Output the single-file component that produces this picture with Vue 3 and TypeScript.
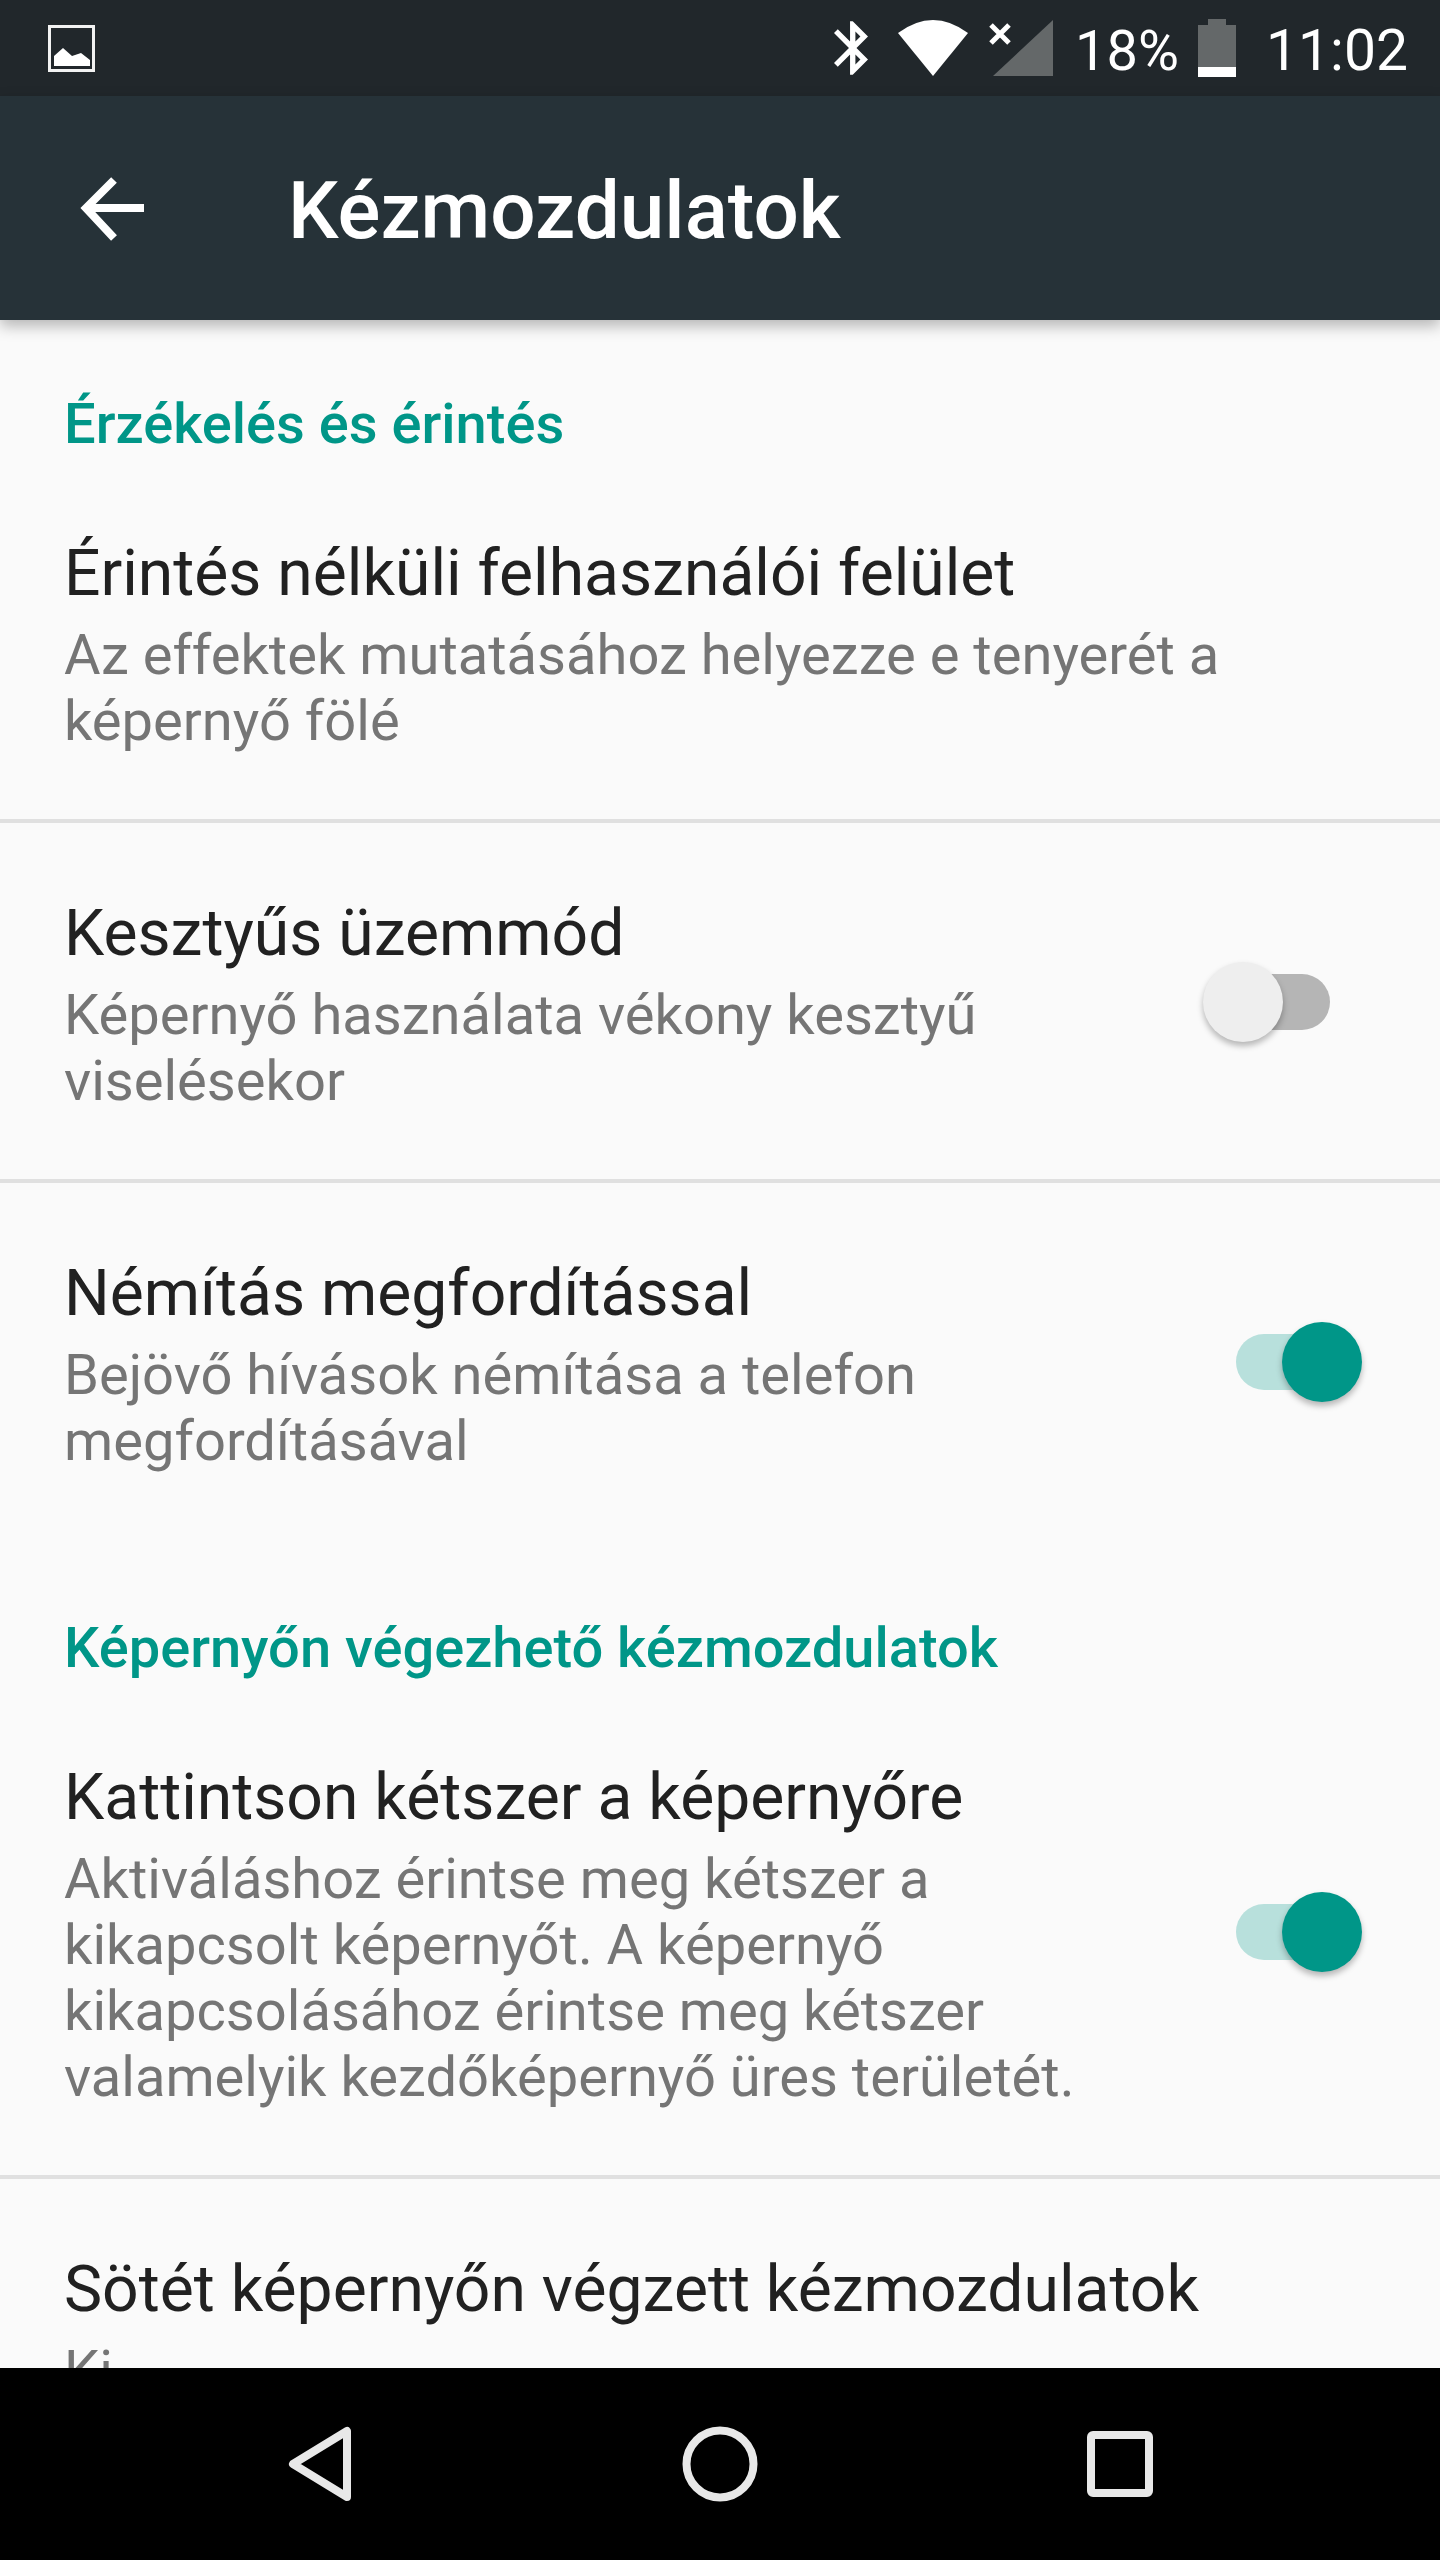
<script setup lang="ts">
interface Setting {
  title: string
  summary: string
  toggle?: boolean
  divider?: boolean
}

interface Section {
  heading: string
  items: Setting[]
}

const sections: Section[] = [
  {
    heading: 'Érzékelés és érintés',
    items: [
      {
        title: 'Érintés nélküli felhasználói felület',
        summary: 'Az effektek mutatásához helyezze e tenyerét a képernyő fölé',
        divider: true,
      },
      {
        title: 'Kesztyűs üzemmód',
        summary: 'Képernyő használata vékony kesztyű viselésekor',
        toggle: false,
        divider: true,
      },
      {
        title: 'Némítás megfordítással',
        summary: 'Bejövő hívások némítása a telefon megfordításával',
        toggle: true,
      },
    ],
  },
  {
    heading: 'Képernyőn végezhető kézmozdulatok',
    items: [
      {
        title: 'Kattintson kétszer a képernyőre',
        summary:
          'Aktiváláshoz érintse meg kétszer a kikapcsolt képernyőt. A képernyő kikapcsolásához érintse meg kétszer valamelyik kezdőképernyő üres területét.',
        toggle: true,
        divider: true,
      },
      {
        title: 'Sötét képernyőn végzett kézmozdulatok',
        summary: 'Ki',
      },
    ],
  },
]
</script>

<template>
  <div class="phone">
    <div class="status-bar">
      <svg class="pic-icon" width="47" height="47" viewBox="0 0 47 47">
        <rect x="1.5" y="1.5" width="44" height="44" fill="none" stroke="#f2f2f2" stroke-width="3" />
        <path d="M6 41V31l9-8 9 8 9-3 9 7v6z" fill="#fff" />
      </svg>
      <div class="status-right">
        <svg class="bt" width="34" height="56" viewBox="5 2 12.71 20">
          <path
            fill="#fff"
            d="M17.71 7.71L12 2h-1v7.59L6.41 5 5 6.41 10.59 12 5 17.59 6.41 19 11 14.41V22h1l5.71-5.71-4.3-4.29 4.3-4.28zM13 5.83l1.88 1.88L13 9.59V5.83zm1.88 10.46L13 18.17v-3.76l1.88 1.88z"
          />
        </svg>
        <svg class="wifi" width="70" height="56" viewBox="0 0 70 56">
          <path d="M0 13Q35-13 70 13L35 56z" fill="#fff" />
        </svg>
        <svg class="signal" width="64" height="56" viewBox="0 0 64 56">
          <path d="M4 56 64 0v56z" fill="#646869" />
          <path d="M2 5l18 18M20 5L2 23" stroke="#fff" stroke-width="5" fill="none" />
        </svg>
        <span class="status-text pct">18%</span>
        <svg class="battery" width="38" height="58" viewBox="0 0 38 58">
          <path d="M10 0h18v6h10v52H0V6h10z" fill="#646869" />
          <path d="M0 48h38v10H0z" fill="#fff" />
        </svg>
        <span class="status-text clock">11:02</span>
      </div>
    </div>

    <header class="app-bar">
      <svg class="back" width="64" height="64" viewBox="0 0 64 64">
        <path d="M64 31H6M34 3 6 31l28 30" fill="none" stroke="#fff" stroke-width="8" />
      </svg>
      <h1 class="app-title">Kézmozdulatok</h1>
    </header>

    <main class="content">
      <section v-for="section in sections" :key="section.heading" class="section">
        <h2 class="section-heading">{{ section.heading }}</h2>
        <div
          v-for="item in section.items"
          :key="item.title"
          class="row"
          :class="{ 'row-divider': item.divider }"
        >
          <div class="row-text">
            <div class="row-title">{{ item.title }}</div>
            <div class="row-summary">{{ item.summary }}</div>
          </div>
          <div v-if="item.toggle !== undefined" class="switch" :class="{ on: item.toggle }">
            <span class="thumb"></span>
          </div>
        </div>
      </section>
    </main>

    <nav class="nav-bar">
      <div class="nav-item">
        <svg width="64" height="76" viewBox="0 0 64 76">
          <path d="M59 5v66L5 38z" fill="none" stroke="#e8e8e8" stroke-width="8" stroke-linejoin="round" />
        </svg>
      </div>
      <div class="nav-item">
        <svg width="76" height="76" viewBox="0 0 76 76">
          <circle cx="38" cy="38" r="33.5" fill="none" stroke="#e8e8e8" stroke-width="8" />
        </svg>
      </div>
      <div class="nav-item">
        <svg width="66" height="66" viewBox="0 0 66 66">
          <rect x="4" y="4" width="58" height="58" rx="2" fill="none" stroke="#e8e8e8" stroke-width="8" />
        </svg>
      </div>
    </nav>
  </div>
</template>

<style>
html,
body {
  margin: 0;
  background: #fafafa;
}
</style>

<style scoped>
.phone {
  display: flex;
  flex-direction: column;
  width: 1440px;
  height: 2560px;
  overflow: hidden;
  background: #fafafa;
  font-family: Roboto, 'Liberation Sans', sans-serif;
}

.status-bar {
  display: flex;
  align-items: center;
  flex: 0 0 96px;
  padding: 0 32px 0 48px;
  background: #21272b;
  box-sizing: border-box;
}

.status-right {
  display: flex;
  align-items: center;
  margin-left: auto;
}

.status-text {
  margin-top: 6px;
  color: #fff;
  font-size: 56px;
  line-height: 90px;
}

.wifi {
  margin-left: 30px;
}

.signal {
  margin-left: 21px;
}

.pct {
  margin-left: 22px;
}

.battery {
  margin-left: 19px;
}

.clock {
  margin-left: 30px;
  font-size: 57px;
}

.app-bar {
  position: relative;
  z-index: 1;
  display: flex;
  align-items: center;
  flex: 0 0 224px;
  padding-left: 80px;
  background: #263238;
  box-sizing: border-box;
  box-shadow: 0 6px 14px rgba(0, 0, 0, 0.28);
}

.back {
  margin-top: 2px;
}

.app-title {
  margin: 6px 0 0 144px;
  color: #fff;
  font-size: 80px;
  font-weight: 500;
}

.content {
  flex: 1;
  min-height: 0;
  overflow: hidden;
}

.section + .section {
  margin-top: 5px;
}

.section-heading {
  height: 143px;
  margin: 0;
  padding: 74px 64px 0;
  box-sizing: border-box;
  color: #009688;
  font-size: 56px;
  font-weight: 500;
  line-height: 60px;
}

.row {
  display: flex;
  align-items: center;
  padding: 62px 78px 65px 64px;
}

.row-divider {
  border-bottom: 4px solid #e0e0e0;
}

.row-text {
  flex: 1;
  min-width: 0;
}

.row-title {
  color: #212121;
  font-size: 64.2px;
  line-height: 97px;
}

.row-summary {
  color: #757575;
  font-size: 56.08px;
  line-height: 66px;
}

.switch {
  position: relative;
  display: flex;
  align-items: center;
  flex: 0 0 159px;
  height: 80px;
  margin: 4px 0 0 40px;
}

.switch::before {
  content: '';
  position: absolute;
  top: 12px;
  left: 33px;
  width: 94px;
  height: 56px;
  border-radius: 28px;
  background: #b5b5b5;
}

.thumb {
  position: relative;
  width: 80px;
  height: 80px;
  border-radius: 50%;
  background: #eeeeee;
  box-shadow: 0 4px 6px rgba(0, 0, 0, 0.28);
}

.switch.on {
  justify-content: flex-end;
}

.switch.on::before {
  background: #b8e0dc;
}

.switch.on .thumb {
  background: #009688;
}

.nav-bar {
  display: grid;
  grid-template-columns: repeat(3, 400px);
  flex: 0 0 192px;
  padding: 0 120px;
  background: #000;
  box-sizing: border-box;
}

.nav-item {
  display: flex;
  align-items: center;
  justify-content: center;
}
</style>
